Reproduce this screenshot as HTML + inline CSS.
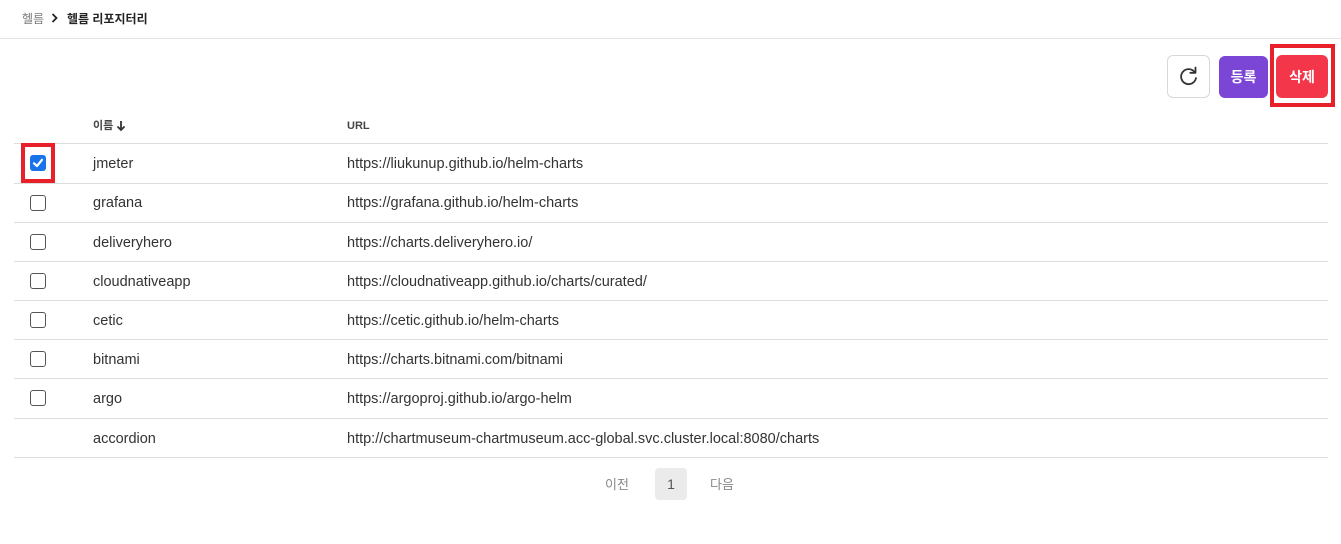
<!DOCTYPE html>
<html><head><meta charset="utf-8"><style>
*{margin:0;padding:0;box-sizing:border-box}
body{width:1341px;height:544px;background:#fff;font-family:"Liberation Sans","Noto Sans CJK KR",sans-serif;position:relative;overflow:hidden;color:#333}
.a{position:absolute}
.hl{left:0;right:0;height:1px;background:#e4e4e4}
.rl{left:14px;width:1314px;height:1px;background:#ddd}
.cb{position:absolute;left:30px;width:16px;height:16px;border:1.5px solid #555;border-radius:3px;background:#fff}
.t{position:absolute;font-size:14.5px;color:#333;line-height:16px;margin-top:1px}
.btn{position:absolute;border-radius:6px;color:#fff;font-weight:bold;font-size:14px;display:flex;align-items:center;justify-content:center}
</style></head><body>
<div class="a" style="left:22px;top:10px;font-size:12px;color:#777">헬름</div>
<svg class="a" style="left:50px;top:12px" width="10" height="12"><path d="M2.5 2 L6.5 6 L2.5 10" fill="none" stroke="#222" stroke-width="1.8"/></svg>
<div class="a" style="left:67px;top:10px;font-size:12px;color:#222;font-weight:bold">헬름 리포지터리</div>
<div class="a hl" style="top:38px"></div>

<div class="a" style="left:1167px;top:55px;width:43px;height:43px;border:1px solid #d8d8d8;border-radius:6px;background:#fff">
<svg width="41" height="41" viewBox="0 0 41 41"><path d="M26.5 16 A7.5 7.5 0 1 0 28 22" fill="none" stroke="#333" stroke-width="1.8" stroke-linecap="round"/><path d="M27.5 11.5 L27.5 16.8 L22.3 16.8" fill="none" stroke="#333" stroke-width="1.8" stroke-linecap="round" stroke-linejoin="round"/></svg></div>
<div class="btn" style="left:1219px;top:56px;width:49px;height:42px;background:#7b45d6">등록</div>
<div class="a" style="left:1270px;top:44px;width:65px;height:63px;border:4px solid #e8202a"></div>
<div class="btn" style="left:1276px;top:55px;width:52px;height:43px;background:#f4364a">삭제</div>

<div class="a" style="left:93px;top:119px;font-size:11px;font-weight:bold;color:#444;line-height:14px">이름</div>
<svg class="a" style="left:116px;top:120px" width="10" height="12"><path d="M5 1 V10 M1.5 6.5 L5 10 L8.5 6.5" fill="none" stroke="#333" stroke-width="1.8"/></svg>
<div class="a" style="left:347px;top:119px;font-size:11px;font-weight:bold;color:#444;line-height:14px">URL</div>
<div class="a rl" style="top:143px"></div>
<div class="a rl" style="top:183px"></div>
<div class="a rl" style="top:222px"></div>
<div class="a rl" style="top:261px"></div>
<div class="a rl" style="top:300px"></div>
<div class="a rl" style="top:339px"></div>
<div class="a rl" style="top:378px"></div>
<div class="a rl" style="top:418px"></div>
<div class="a rl" style="top:457px"></div>

<div class="a" style="left:21px;top:143px;width:34px;height:40px;border:4px solid #e8202a"></div>
<div class="a" style="left:30px;top:155px;width:16px;height:16px;background:#1a73e8;border-radius:3px"><svg width="16" height="16"><path d="M4 8.3 L7 11 L12 4.8" fill="none" stroke="#fff" stroke-width="2.2" stroke-linecap="round" stroke-linejoin="round"/></svg></div>
<div class="t" style="left:93px;top:155px">jmeter</div><div class="t" style="left:347px;top:155px">https://liukunup.github.io/helm-charts</div>
<div class="cb" style="top:195px"></div><div class="t" style="left:93px;top:194px">grafana</div><div class="t" style="left:347px;top:194px">https://grafana.github.io/helm-charts</div>
<div class="cb" style="top:234px"></div><div class="t" style="left:93px;top:234px">deliveryhero</div><div class="t" style="left:347px;top:234px">https://charts.deliveryhero.io/</div>
<div class="cb" style="top:273px"></div><div class="t" style="left:93px;top:273px">cloudnativeapp</div><div class="t" style="left:347px;top:273px">https://cloudnativeapp.github.io/charts/curated/</div>
<div class="cb" style="top:312px"></div><div class="t" style="left:93px;top:312px">cetic</div><div class="t" style="left:347px;top:312px">https://cetic.github.io/helm-charts</div>
<div class="cb" style="top:351px"></div><div class="t" style="left:93px;top:351px">bitnami</div><div class="t" style="left:347px;top:351px">https://charts.bitnami.com/bitnami</div>
<div class="cb" style="top:390px"></div><div class="t" style="left:93px;top:390px">argo</div><div class="t" style="left:347px;top:390px">https://argoproj.github.io/argo-helm</div>
<div class="t" style="left:93px;top:430px">accordion</div><div class="t" style="left:347px;top:430px">http://chartmuseum-chartmuseum.acc-global.svc.cluster.local:8080/charts</div>

<div class="a" style="left:605px;top:474px;font-size:13px;color:#888">이전</div>
<div class="a" style="left:655px;top:468px;width:32px;height:32px;background:#ebebeb;border-radius:4px;font-size:14px;color:#555;display:flex;align-items:center;justify-content:center">1</div>
<div class="a" style="left:710px;top:474px;font-size:13px;color:#888">다음</div>
</body></html>
